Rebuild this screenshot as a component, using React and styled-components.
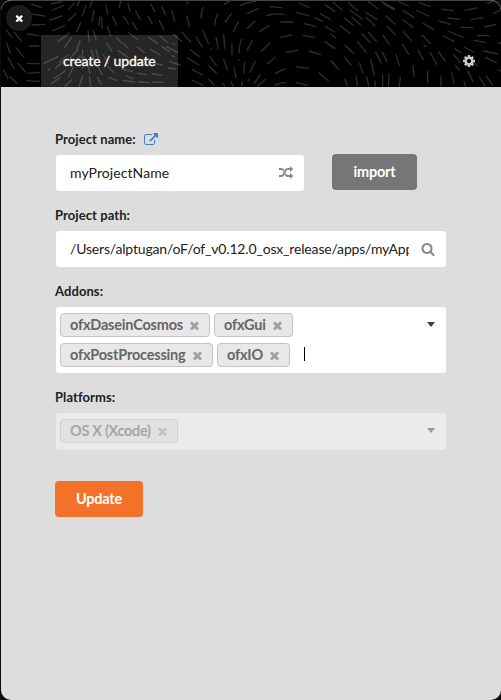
import React from "react";
import styled, { createGlobalStyle } from "styled-components";

const GlobalStyle = createGlobalStyle`
  * { box-sizing: border-box; }
  html, body { margin: 0; padding: 0; background: #0c0c09; }
  body { font-family: Lato, "Liberation Sans", sans-serif; font-size: 14px; color: rgba(0, 0, 0, 0.87); }
  button { font-family: inherit; }
`;

const Window = styled.div`
  display: flex;
  flex-direction: column;
  width: 500px;
  height: 700px;
  margin-left: 1px;
  overflow: hidden;
  border-radius: 10px;
  background: #ddd;
`;

const Header = styled.header`
  position: relative;
  display: flex;
  align-items: flex-end;
  height: 87px;
  flex: none;
  background: #000;
  border-top: 1px solid #454745;
  border-radius: 10px 10px 0 0;
`;

const Pattern = styled.svg`
  position: absolute;
  left: -1px;
  top: -1px;
  width: 501px;
  height: 87px;
  fill: none;
  stroke: #2c2e2e;
  stroke-width: 4;
  stroke-linecap: round;
`;

const CloseButton = styled.button`
  position: absolute;
  left: 5px;
  top: 4px;
  display: flex;
  align-items: center;
  justify-content: center;
  width: 26px;
  height: 26px;
  padding: 0;
  border: 0;
  border-radius: 50%;
  background: #1b1c1d;
  color: #fff;
`;

const Tab = styled.div`
  position: relative;
  display: flex;
  align-items: center;
  width: 137px;
  height: 52px;
  margin-left: 40px;
  padding: 0 0 2px 22px;
  background: rgba(255, 255, 255, 0.15);
  color: #fff;
  font-size: 14px;
  letter-spacing: -0.12px;
  white-space: nowrap;
  -webkit-text-stroke: 0.3px #fff;
`;

const Settings = styled.div`
  position: relative;
  display: flex;
  align-items: center;
  height: 52px;
  margin-left: auto;
  margin-right: 25px;
  color: #c8c8c8;
`;

const Form = styled.form`
  display: flex;
  flex-direction: column;
  align-items: flex-start;
  padding: 44px 55px 0 54px;
`;

const Label = styled.div`
  display: flex;
  align-items: center;
  height: 17px;
  gap: 8px;
  margin-bottom: 7px;
  font-size: 13px;
  font-weight: 700;
  line-height: 17px;
  letter-spacing: 0.08px;
  color: #212121;
`;

const Row = styled.div`
  display: flex;
  gap: 28px;
  margin-bottom: 16px;
`;

const Field = styled.div`
  display: flex;
  align-items: center;
  justify-content: space-between;
  width: ${(p) => p.$width}px;
  height: 36px;
  margin: 0 0 ${(p) => p.$after || 0}px 1px;
  padding: 0 11px 0 14px;
  border-radius: 3px;
  background: #fff;
  color: #888;
`;

const Value = styled.span`
  width: ${(p) => p.$width}px;
  overflow: hidden;
  white-space: nowrap;
  color: #212121;
  line-height: 20px;
  letter-spacing: ${(p) => p.$tracking || 0}px;
`;

const Button = styled.button`
  width: ${(p) => p.$width}px;
  height: 36px;
  margin: ${(p) => p.$margin || "0"};
  padding: 0;
  border: 0;
  border-radius: 4px;
  background: ${(p) => p.$color};
  color: #fff;
  font-size: 14.5px;
  letter-spacing: -0.2px;
  font-weight: 700;
  line-height: 14px;
`;

const Dropdown = styled.div`
  display: flex;
  justify-content: space-between;
  width: 390px;
  height: ${(p) => p.$height}px;
  margin: 0 0 ${(p) => p.$after}px 1px;
  padding: 6px 11px 0 4px;
  border-radius: 3px;
  background: ${(p) => (p.$disabled ? "#ebebeb" : "#fff")};
  color: ${(p) => (p.$disabled ? "#999" : "#404040")};
`;

const Tags = styled.div`
  display: flex;
  flex-wrap: wrap;
  align-content: flex-start;
  width: 290px;
  gap: 6px 4px;
`;

const Tag = styled.div`
  display: flex;
  align-items: center;
  justify-content: space-between;
  width: ${(p) => p.$width}px;
  height: 24px;
  padding: 0 8px 0 9px;
  border: 1px solid ${(p) => (p.$disabled ? "#d2d2d2" : "#c4c4c4")};
  border-radius: 4px;
  background: ${(p) => (p.$disabled ? "#e1e1e1" : "#e8e8e8")};
  color: ${(p) => (p.$disabled ? "#a5a5a5" : "#666")};
  font-size: 14.5px;
  font-weight: 700;
  line-height: 14px;
  letter-spacing: ${(p) => p.$tracking || -0.2}px;
  white-space: nowrap;

  svg { color: ${(p) => (p.$disabled ? "#c3c3c3" : "#a0a0a0")}; margin-top: 1px; }
`;

const Caret = styled.span`
  width: 1px;
  height: 14px;
  margin: 4px 0 0 10px;
  background: #000;
`;

const Arrow = styled.span`
  width: 0;
  height: 0;
  margin-top: 9px;
  border: 4.5px solid transparent;
  border-width: 5px 4.5px 0;
  border-top-color: currentColor;
`;

const Glyph = styled.svg`
  display: block;
  flex: none;
  fill: currentColor;
`;

const PATHS = {
  close: "M1490 1322q0 40-28 68l-136 136q-28 28-68 28t-68-28l-294-294-294 294q-28 28-68 28t-68-28l-136-136q-28-28-28-68t28-68l294-294-294-294q-28-28-28-68t28-68l136-136q28-28 68-28t68 28l294 294 294-294q28-28 68-28t68 28l136 136q28 28 28 68t-28 68l-294 294 294 294q28 28 28 68z",
  external: "M1408 928v320q0 119-84.5 203.5t-203.5 84.5h-832q-119 0-203.5-84.5t-84.5-203.5v-832q0-119 84.5-203.5t203.5-84.5h704q14 0 23 9t9 23v64q0 14-9 23t-23 9h-704q-66 0-113 47t-47 113v832q0 66 47 113t113 47h832q66 0 113-47t47-113v-320q0-14 9-23t23-9h64q14 0 23 9t9 23zm384-864v512q0 26-19 45t-45 19-45-19l-176-176-652 652q-10 10-23 10t-23-10l-114-114q-10-10-10-23t10-23l652-652-176-176q-19-19-19-45t19-45 45-19h512q26 0 45 19t19 45z",
  random: "M666 481q-60 92-137 273-22-45-37-72.5t-40.5-63.5-51-56.5-63-35-81.5-14.5h-224q-14 0-23-9t-9-23v-192q0-14 9-23t23-9h224q250 0 410 225zm1126 799q0 14-9 23l-320 320q-9 9-23 9-13 0-22.5-9.5t-9.5-22.5v-192q-32 0-85 .5t-81 1-73-1-71-5-64-10.5-63-18.5-58-28.5-59-40-55-53.5-56-69.5q59-93 136-273 22 45 37 72.5t40.5 63.5 51 56.5 63 35 81.5 14.5h256v-192q0-14 9-23t23-9q12 0 24 10l319 319q9 9 9 23zm0-896q0 14-9 23l-320 320q-9 9-23 9-13 0-22.5-9.5t-9.5-22.5v-192h-256q-48 0-87 15t-69 45-51 61.5-45 77.5q-32 62-78 171-29 66-49.5 111t-54 105-64 100-74 83-90 68.5-106.5 42-128 16.5h-224q-14 0-23-9t-9-23v-192q0-14 9-23t23-9h224q48 0 87-15t69-45 51-61.5 45-77.5q32-62 78-171 29-66 49.5-111t54-105 64-100 74-83 90-68.5 106.5-42 128-16.5h256v-192q0-14 9-23t23-9q12 0 24 10l319 319q9 9 9 23z",
  search: "M1216 832q0-185-131.5-316.5t-316.5-131.5-316.5 131.5-131.5 316.5 131.5 316.5 316.5 131.5 316.5-131.5 131.5-316.5zm512 832q0 52-38 90t-90 38q-54 0-90-38l-343-342q-179 124-399 124-143 0-273.5-55.5t-225-150-150-225-55.5-273.5 55.5-273.5 150-225 225-150 273.5-55.5 273.5 55.5 225 150 150 225 55.5 273.5q0 220-124 399l343 343q37 37 37 90z",
  cog: "M1152 896q0-106-75-181t-181-75-181 75-75 181 75 181 181 75 181-75 75-181zm512-109v222q0 12-8 23t-20 13l-185 28q-19 54-39 91 35 50 107 138 10 12 10 25t-9 23q-27 37-99 108t-94 71q-12 0-26-9l-138-108q-44 23-91 38-16 136-29 186-7 28-36 28h-222q-14 0-24.5-8.5t-11.5-21.5l-28-184q-49-16-90-37l-141 107q-10 9-25 9-14 0-25-11-126-114-165-168-7-10-7-23 0-12 8-23 15-21 51-66.5t54-70.5q-27-50-41-99l-183-27q-13-2-21-12.5t-8-23.5v-222q0-12 8-23t19-13l186-28q14-46 39-92-40-57-107-138-10-12-10-24 0-10 9-23 26-36 98.5-107.5t94.5-71.5q13 0 26 10l138 107q44-23 91-38 16-136 29-186 7-28 36-28h222q14 0 24.5 8.5t11.5 21.5l28 184q49 16 90 37l142-107q9-9 24-9 13 0 25 10 129 119 165 170 7 8 7 22 0 12-8 23-15 21-51 66.5t-54 70.5q26 50 41 98l183 28q13 2 21 12.5t8 23.5z",
};

const Icon = ({ name, size }) => (
  <Glyph width={size} height={size} viewBox="0 0 1792 1792">
    <path d={PATHS[name]} />
  </Glyph>
);

const STROKES_LEFT =
  "M95 12L124 22M95 42L134 48M96 75L134 73M150 60L186 48M158 92L194 77M154 12L188 4M158 30L190 17M205 28L222 10M206 62L228 40M174 125L208 99M194 142L215 112M231 16L238 5M230 96L242 68M248 45L258 16M270 22L276 4M276 62L282 32M297 75L300 48M280 90L288 118M264 92L268 124M305 52L306 84M318 15L323 42M338 50L350 76M322 80L332 108M370 48L386 72M358 22L362 5M384 12L390 32M407 33L420 58M397 66L410 88M444 48L456 70M452 12L464 34M478 62L492 90M486 20L496 44M42 96L64 123M20 92L36 112M84 102L116 107M88 138L117 138M20 130L30 158M48 143L70 170M24 172L42 205M54 190L76 216M82 190L118 191M84 220L118 217M10 210L24 235M30 230L50 250M80 242L118 244M132 190L174 170M145 210L150 206M166 205L192 184M164 235L196 212M152 252L180 233M206 230L220 200M196 258L214 240M178 187L205 164M210 176L232 150M222 190L240 168M230 150L240 122M238 258L248 228M246 180L248 150M248 205L252 170M262 190L270 220M288 150L298 184M274 150L282 177M268 230L272 258M292 232L304 254M294 200L306 224M310 165L325 190M320 130L336 154M324 200L342 218M326 232L352 242M350 112L365 130M354 152L384 172M370 130L384 144M385 98L412 118M366 207L398 215M370 242L404 246M380 228L398 236M396 185L430 194M412 220L440 224M416 246L448 248M413 142L434 158M446 112L472 130M452 148L480 165M452 188L486 195M456 222L486 226M458 246L490 247M480 108L504 128M486 140L508 154";

const STROKES_MIDDLE =
  "M20 32L29 64M66 12L71 1M65 48L74 80M108 54Q108 35 115 22M149 76Q150 56 158 42M178 13L197 1M181 66L199 40M205 94L220 66M226 17Q248 5 273 4M247 40L280 26M247 85L270 63M284 94L313 77M305 47Q325 40 353 42M316 20L350 23M348 66L383 66M402 9L433 23M395 37L430 47M417 70L452 80M450 53L472 64M465 41L496 58M480 14L509 34M481 80L509 96M347 112L380 105M414 106L448 112M480 125L508 145M289 154L315 129M246 151L262 122M222 158Q222 135 230 117M201 132L201 165M176 103L179 145M153 112L160 145M114 92L130 130M93 111L111 140M50 96L77 126M25 103L50 124M5 140L38 158M77 150L105 171M66 173L102 195M14 185L46 195M10 204L30 207M134 170L154 196M132 197L154 220M82 209L112 225M80 240L115 256M130 237L148 256M176 179L188 210M207 203L213 232M236 220L239 187M255 217L271 184M268 251L285 224M250 242L253 238M278 258L302 238M307 191L331 172M331 220L361 206M363 157L397 151M433 153L466 164M396 201L430 205M462 219L490 242M330 256Q345 247 362 248M394 247L427 256M499 183L508 192M172 250L179 258M198 246L203 258M232 245L230 258M221 180L222 181M138 146L140 148M360 43L361 44M20 167L28 170M25 130L28 132";

const STROKES_RIGHT =
  "M7 7L33 30M53 8L80 32M110 2L140 26M158 12L190 30M151 4L190 26M198 2L232 18M264 8L298 20M332 28L367 32M402 31L437 24M469 10L489 3M59 32L93 57M105 38L138 58M166 48L192 72M217 32L248 52M257 32L293 48M351 54L385 58M325 63L358 73M391 82L426 83M421 59L455 53M461 81L494 73M489 40L508 30M41 54L65 75M63 52L88 74M105 52L132 77M28 77L57 100M170 80L193 104M217 60L245 82M277 70L308 89M351 93L396 112M338 108L368 124M440 107L475 107M429 121L463 127M156 106L175 133M113 97L136 124M93 102L118 128M217 95L241 122M273 106L298 130M42 136L67 160M79 124L105 157M215 134L233 163M278 136L284 139M262 151L277 179M297 157L318 193M323 156L344 184M370 146L390 158M400 141L428 156M459 153L499 162M464 173L496 188M367 164L390 188M373 196L385 211M427 182L438 198M39 170L60 195M86 190L96 221M119 180L130 225M134 157L151 189M154 156L168 185M195 164L205 197M246 196L249 230M290 215L290 248M330 230L330 258M362 218L369 250M411 214L426 244M399 244L403 258M445 231L462 258M465 228L485 255M0 103L14 114M0 183L22 207M0 138L12 144M42 238L49 258M75 228L80 258M107 231L113 256M132 243L132 258M155 225L155 258M174 222L172 258M208 233L205 258M502 210L508 213M501 129L508 129";

export default function App() {
  return (
    <>
      <GlobalStyle />
      <Window>
        <Header>
          <Pattern viewBox="0 0 1503 261">
            <path d={STROKES_LEFT} />
            <path d={STROKES_MIDDLE} transform="translate(495 0)" />
            <path d={STROKES_RIGHT} transform="translate(993 0)" />
          </Pattern>
          <CloseButton type="button" aria-label="Close">
            <Icon name="close" size={10.5} />
          </CloseButton>
          <Tab>create / update</Tab>
          <Settings>
            <Icon name="cog" size={14} />
          </Settings>
        </Header>

        <Form>
          <Label>
            Project name:
            <Glyph width="14" height="13" viewBox="0 0 1792 1664" color="#4183c4">
              <path d={PATHS.external} />
            </Glyph>
          </Label>
          <Row>
            <Field $width={248}>
              <Value $width={180} $tracking={0.08}>myProjectName</Value>
              <Icon name="random" size={14} />
            </Field>
            <Button type="button" $width={85} $color="#767676" $margin="-1px 0 0">import</Button>
          </Row>

          <Label>Project path:</Label>
          <Field $width={390} $after={16}>
            <Value $width={339} $tracking={-0.17}>/Users/alptugan/oF/of_v0.12.0_osx_release/apps/myApp</Value>
            <Icon name="search" size={14} />
          </Field>

          <Label>Addons:</Label>
          <Dropdown $height={66} $after={16}>
            <Tags>
              <Tag $width={150}>ofxDaseinCosmos<Icon name="close" size={13} /></Tag>
              <Tag $width={79}>ofxGui<Icon name="close" size={13} /></Tag>
              <Tag $width={153}>ofxPostProcessing<Icon name="close" size={13} /></Tag>
              <Tag $width={73}>ofxIO<Icon name="close" size={13} /></Tag>
              <Caret />
            </Tags>
            <Arrow />
          </Dropdown>

          <Label>Platforms:</Label>
          <Dropdown $height={37} $after={31} $disabled>
            <Tags>
              <Tag $width={118} $tracking={-0.3} $disabled>OS X (Xcode)<Icon name="close" size={13} /></Tag>
            </Tags>
            <Arrow />
          </Dropdown>

          <Button type="button" $width={88} $color="#f37128">Update</Button>
        </Form>
      </Window>
    </>
  );
}
